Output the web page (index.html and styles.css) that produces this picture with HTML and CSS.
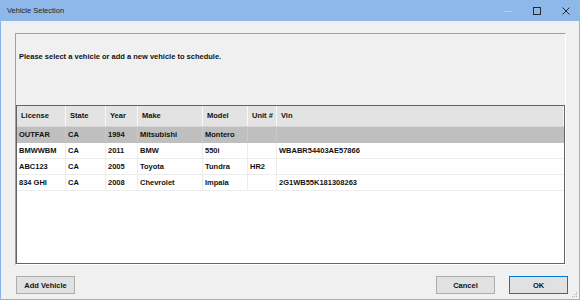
FILE: index.html
```html
<!DOCTYPE html>
<html lang="en">
<head>
    <meta charset="UTF-8">
    <title>Vehicle Selection</title>
    <link rel="stylesheet" href="styles.css">
</head>
<body>
    <div class="window">
        <div class="titlebar">
            <span class="title">Vehicle Selection</span>
            <div class="controls">
                <span class="ctl">
                    <svg width="10" height="10" viewBox="0 0 10 10"><path d="M1 5.5h8" stroke="#b9cde6" stroke-width="1"/></svg>
                </span>
                <span class="ctl">
                    <svg width="10" height="10" viewBox="0 0 10 10"><rect x="1.5" y="1.5" width="7" height="7" fill="none" stroke="#2b2b2b" stroke-width="1"/></svg>
                </span>
                <span class="ctl">
                    <svg width="10" height="10" viewBox="0 0 10 10"><path d="M1.5 1.5l7 7M8.5 1.5l-7 7" stroke="#2b2b2b" stroke-width="1"/></svg>
                </span>
            </div>
        </div>

        <div class="content">
            <div class="panel">
                <p class="prompt">Please select a vehicle or add a new vehicle to schedule.</p>
                <div class="list">
                    <div class="row head">
                        <div>License</div><div>State</div><div>Year</div><div>Make</div><div>Model</div><div>Unit #</div><div>Vin</div>
                    </div>
                    <div class="row selected">
                        <div>OUTFAR</div><div>CA</div><div>1994</div><div>Mitsubishi</div><div>Montero</div><div></div><div></div>
                    </div>
                    <div class="row">
                        <div>BMWWBM</div><div>CA</div><div>2011</div><div>BMW</div><div>550i</div><div></div><div>WBABR54403AE57866</div>
                    </div>
                    <div class="row">
                        <div>ABC123</div><div>CA</div><div>2005</div><div>Toyota</div><div>Tundra</div><div>HR2</div><div></div>
                    </div>
                    <div class="row">
                        <div>834 GHI</div><div>CA</div><div>2008</div><div>Chevrolet</div><div>Impala</div><div></div><div>2G1WB55K181308263</div>
                    </div>
                </div>
            </div>

            <div class="footer">
                <button class="btn">Add Vehicle</button>
                <div class="actions">
                    <button class="btn">Cancel</button>
                    <button class="btn primary">OK</button>
                </div>
            </div>
        </div>

        <!-- resize grip -->
        <svg class="grip" width="7" height="7" viewBox="0 0 7 7">
            <rect x="5" y="1" width="1" height="1" fill="#b0b0b0"/>
            <rect x="3" y="3" width="1" height="1" fill="#b0b0b0"/>
            <rect x="5" y="3" width="1" height="1" fill="#b0b0b0"/>
            <rect x="1" y="5" width="1" height="1" fill="#b0b0b0"/>
            <rect x="3" y="5" width="1" height="1" fill="#b0b0b0"/>
            <rect x="5" y="5" width="1" height="1" fill="#b0b0b0"/>
        </svg>
    </div>
</body>
</html>
```

FILE: styles.css
```css
body {
    margin: 0;
    padding: 0;
    font-family: "Liberation Sans", Arial, sans-serif;
    color: #111;
}

.window {
    position: relative;
    width: 580px;
    height: 300px;
    box-sizing: border-box;
    border: 1px solid #8ab4e8;
    border-top: none;
    background-color: #f0f0f0;
    display: flex;
    flex-direction: column;
}

.titlebar {
    height: 21px;
    background-color: #8fb8ea;
    display: flex;
    align-items: center;
    justify-content: space-between;
    margin: 0 -1px;
    padding-left: 7px;
}

.title {
    font-size: 7.5px;
    color: #1e1e1e;
}

.controls {
    display: flex;
    height: 21px;
}

.ctl {
    width: 29px;
    display: flex;
    align-items: center;
    justify-content: center;
}

.content {
    flex: 1;
    display: flex;
    flex-direction: column;
    padding: 12px 13px 0 14px;
}

.panel {
    height: 232px;
    box-sizing: border-box;
    border-top: 1px solid #a0a0a0;
    border-left: 1px solid #a0a0a0;
    border-right: 1px solid #ffffff;
    border-bottom: 1px solid #ffffff;
    display: flex;
    flex-direction: column;
}

.prompt {
    margin: 0;
    height: 71px;
    box-sizing: border-box;
    padding: 18px 0 0 3px;
    font-size: 7.5px;
    font-weight: bold;
    line-height: 10px;
}

.list {
    flex: 1;
    background-color: #fff;
    border: 1px solid #646464;
    font-size: 7.5px;
    font-weight: bold;
}

.row {
    display: grid;
    grid-template-columns: 49px 40px 32px 65px 45px 29px 1fr;
    height: 16px;
    border-bottom: 1px solid #ececec;
    box-sizing: border-box;
}

.row div {
    border-right: 1px solid #ececec;
    padding-left: 2px;
    line-height: 15px;
    white-space: nowrap;
    overflow: hidden;
}

.row div:last-child {
    border-right: none;
}

.row.head {
    height: 21px;
    background-color: #e3e3e3;
    border-bottom: 1px solid #d6d6d6;
}

.row.head div {
    padding-left: 4px;
    line-height: 20px;
    border-right: 1px solid #f8f8f8;
}

.row.selected {
    background-color: #bfbfbf;
    border-bottom-color: #bfbfbf;
}

.row.selected div {
    border-right-color: #c9c9c9;
}

.footer {
    display: flex;
    justify-content: space-between;
    align-items: flex-start;
    padding: 11px 0 0 1px;
    margin-right: -2px;
}

.actions {
    display: flex;
    gap: 14px;
}

.btn {
    width: 59px;
    height: 18px;
    background-color: #e1e1e1;
    border: 1px solid #adadad;
    font-family: "Liberation Sans", Arial, sans-serif;
    font-size: 7.5px;
    font-weight: bold;
    color: #111;
    padding: 0;
    cursor: pointer;
}

.btn.primary {
    border-color: #0078d7;
}

.grip {
    position: absolute;
    right: 1px;
    bottom: 1px;
}
```
